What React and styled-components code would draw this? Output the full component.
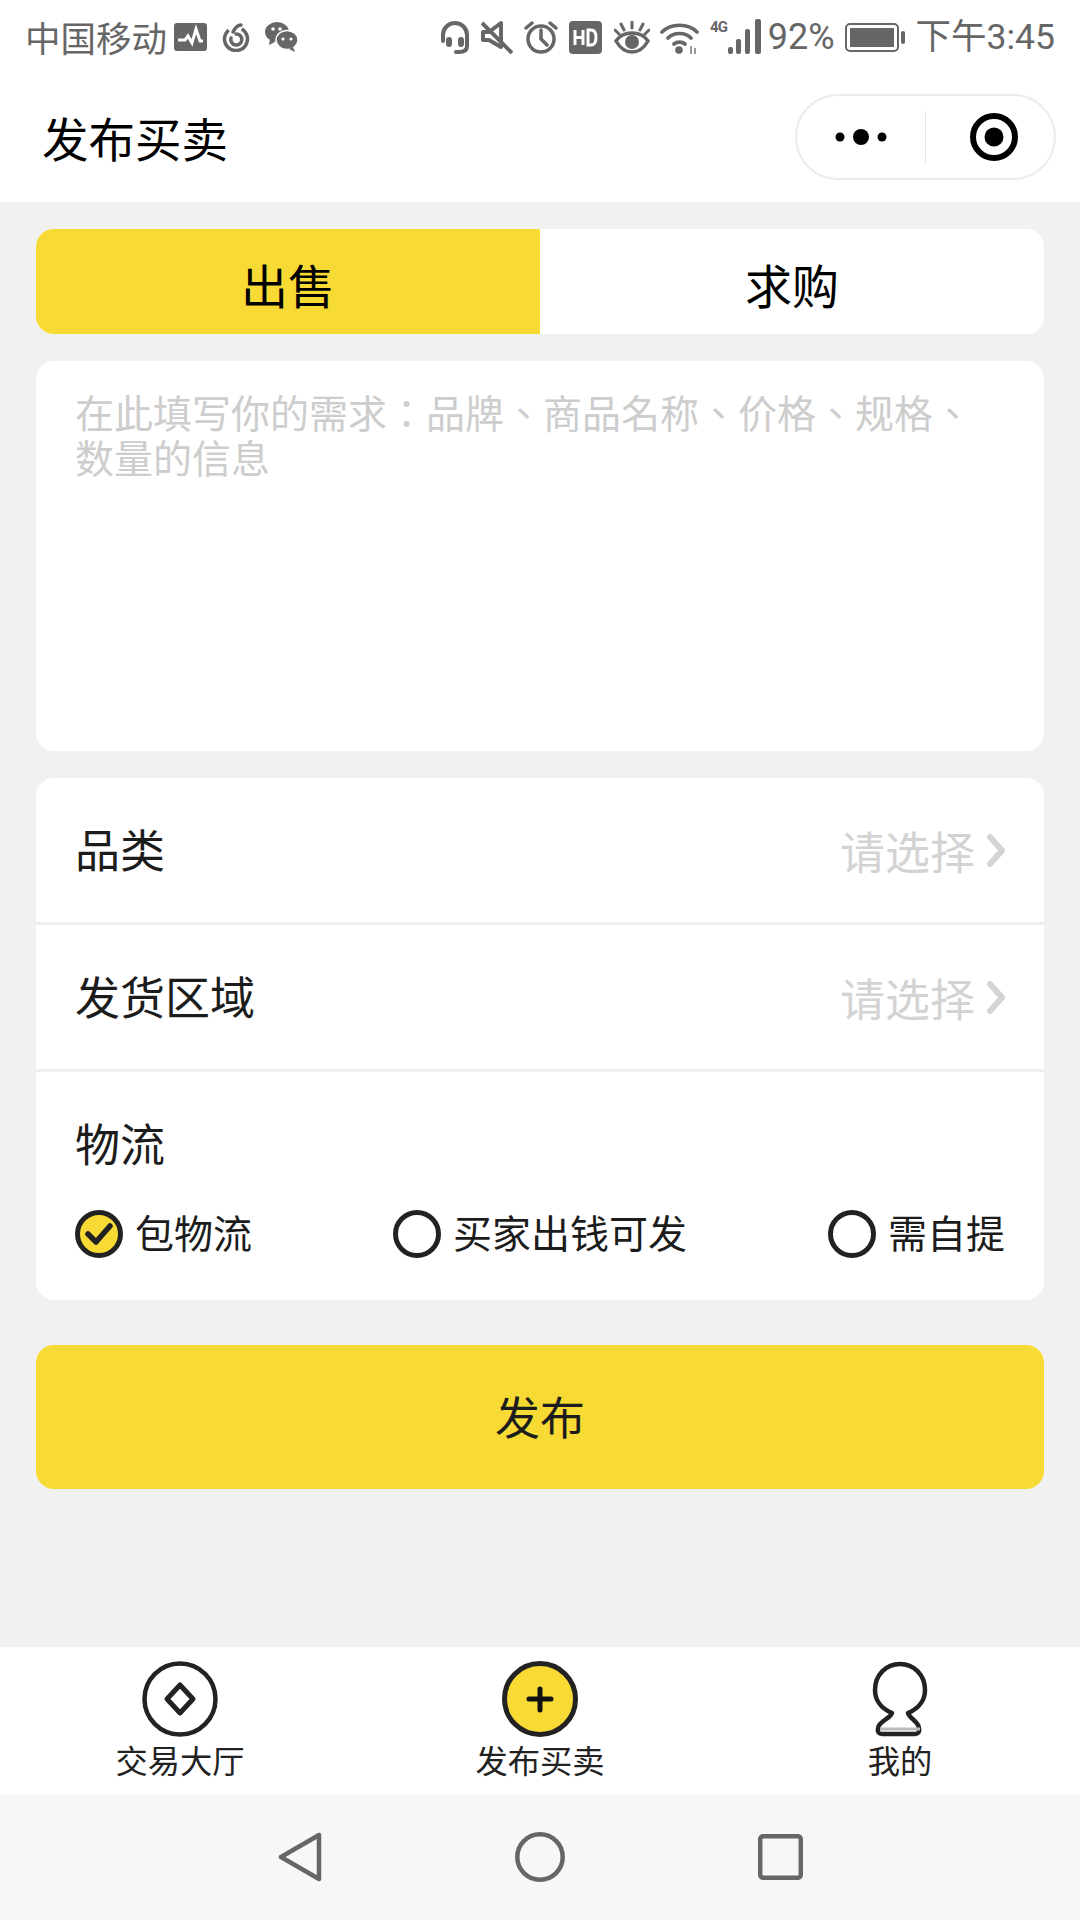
import styled, { createGlobalStyle } from 'styled-components';

const GlobalStyle = createGlobalStyle`
  * {
    box-sizing: border-box;
  }
  html, body {
    margin: 0;
    padding: 0;
    background: #f1f1f1;
  }
  body {
    font-family: "Noto Sans CJK SC", "Noto Sans", sans-serif;
  }
`;

const Page = styled.div`
  width: 1080px;
  height: 1920px;
  display: flex;
  flex-direction: column;
  background: #f1f1f1;
  overflow: hidden;
`;

const StatusBar = styled.div`
  height: 75px;
  flex: none;
  display: flex;
  align-items: center;
  justify-content: space-between;
  padding: 0 25px 0 25px;
  background: #fff;
  color: #666;
  font-size: 35.5px;
  line-height: 40px;
`;

const StatusGroup = styled.div`
  display: flex;
  align-items: center;
  height: 40px;
  margin-top: -1px;
`;

const Carrier = styled.span`
  margin-right: 7px;
`;

const StatusIcon = styled.svg`
  display: block;
  flex: none;
  margin-left: ${(props) => props.$gap || 0}px;
`;

const Percent = styled.span`
  font-family: Roboto, sans-serif;
  font-size: 36px;
  margin-left: 6px;
`;

const Clock = styled.span`
  font-family: Roboto, "Noto Sans CJK SC", sans-serif;
  font-size: 35.5px;
  margin-left: 11px;
`;

const TitleBar = styled.div`
  height: 127px;
  flex: none;
  display: flex;
  align-items: center;
  justify-content: space-between;
  padding: 0 24px 4px 42px;
  background: #fff;
`;

const Title = styled.div`
  font-size: 46.5px;
  line-height: 60px;
  color: #000;
`;

const Capsule = styled.div`
  width: 261px;
  height: 86px;
  display: flex;
  align-items: center;
  border: 2px solid #ececec;
  border-radius: 43px;
  background: #fff;
`;

const CapsuleSide = styled.div`
  flex: ${(props) => (props.$divided ? '1' : '0 0 128px')};
  height: 52px;
  display: flex;
  align-items: center;
  justify-content: center;
  padding-left: ${(props) => (props.$divided ? '8px' : '0')};
  border-left: ${(props) => (props.$divided ? '1px solid #e4e4e4' : 'none')};
`;

const Main = styled.main`
  flex: 1;
  display: flex;
  flex-direction: column;
  padding: 27px 36px 0;
`;

const Tabs = styled.div`
  height: 105px;
  display: flex;
  border-radius: 18px;
  overflow: hidden;
  background: #fff;
`;

const Tab = styled.div`
  flex: 1;
  display: flex;
  align-items: center;
  justify-content: center;
  padding-top: 3px;
  font-size: 47px;
  color: #000;
  background: ${(props) => (props.$active ? '#f7da33' : '#fff')};
`;

const NoteCard = styled.div`
  height: 390px;
  margin-top: 27px;
  padding: 28px 39px;
  border-radius: 18px;
  background: #fff;
  color: #cdcdcd;
  font-family: "Noto Sans CJK TC", "Noto Sans CJK SC", sans-serif;
  font-size: 39px;
  line-height: 45px;
`;

const FormCard = styled.div`
  margin-top: 27px;
  border-radius: 18px;
  background: #fff;
  overflow: hidden;
`;

const Row = styled.div`
  height: 147px;
  display: flex;
  align-items: center;
  justify-content: space-between;
  padding: 0 39px;
  border-bottom: 3px solid #eeeeee;
`;

const RowLabel = styled.div`
  font-size: 45px;
  line-height: 60px;
  color: #1c1c1c;
  margin-top: -2px;
`;

const RowValue = styled.div`
  display: flex;
  align-items: center;
  gap: 12px;
  font-size: 45px;
  color: #d3d3d3;
`;

const Logistics = styled.div`
  height: 228px;
  padding: 43px 39px 0;
`;

const Options = styled.div`
  display: flex;
  justify-content: space-between;
  margin-top: 31px;
`;

const Option = styled.div`
  display: flex;
  align-items: center;
  gap: 12px;
  font-size: 39px;
  line-height: 48px;
  color: #1c1c1c;
`;

const Radio = styled.span`
  width: 48px;
  height: 48px;
  flex: none;
  display: flex;
  align-items: center;
  justify-content: center;
  margin-top: 6px;
  border: 5px solid #222;
  border-radius: 50%;
  background: ${(props) => (props.$checked ? '#f7da33' : '#fff')};
`;

const PublishButton = styled.button`
  height: 144px;
  margin-top: 45px;
  padding: 0 0 4px;
  border: none;
  border-radius: 18px;
  background: #f7da33;
  color: #1c1c1c;
  font-family: inherit;
  font-size: 45px;
`;

const TabBar = styled.nav`
  height: 147px;
  flex: none;
  display: flex;
  background: #fff;
`;

const TabItem = styled.div`
  width: 360px;
  display: flex;
  flex-direction: column;
  align-items: center;
  padding-top: 14px;
`;

const TabLabel = styled.div`
  margin-top: 1px;
  font-size: 32.3px;
  line-height: 42px;
  color: #222;
`;

const NavBar = styled.div`
  height: 126px;
  flex: none;
  display: flex;
  align-items: center;
  justify-content: center;
  background: #f7f7f7;
`;

const NavSlot = styled.div`
  width: 240px;
  display: flex;
  justify-content: center;
`;

const Chevron = () => (
  <svg width="18" height="33" viewBox="0 0 18 33">
    <path d="M3 3l12 13.5L3 30" fill="none" stroke="#d4d4d4" strokeWidth="6" strokeLinecap="round" strokeLinejoin="round" />
  </svg>
);

const StatusLeftIcons = () => (
  <>
    <StatusIcon width="33" height="28" viewBox="0 0 33 28">
      <rect width="33" height="28" rx="3" fill="#666" />
      <path d="M4 17h7l3-4 4 7 4-14 4 12h3" fill="none" stroke="#fff" strokeWidth="3" />
    </StatusIcon>
    <StatusIcon $gap={14} width="30" height="30" viewBox="0 0 30 30">
      <circle cx="15" cy="17" r="11.500" fill="none" stroke="#666" strokeWidth="3.500" strokeDasharray="58 14" transform="rotate(-60 15 17)" />
      <path d="M20 3c-4 0-6 3-8 7M15 12a5.500 5.500 0 1 1-5 4" fill="none" stroke="#666" strokeWidth="3.500" strokeLinecap="round" />
    </StatusIcon>
    <StatusIcon $gap={14} width="33" height="30" viewBox="0 0 33 30">
      <ellipse cx="12" cy="10" rx="12" ry="10" fill="#666" />
      <path d="M5 17l-1 6 6-3z" fill="#666" />
      <ellipse cx="22" cy="18" rx="11" ry="9.500" fill="#666" stroke="#fff" strokeWidth="1.500" />
      <path d="M28 25l2 5-6-3z" fill="#666" />
      <circle cx="8" cy="7" r="1.800" fill="#fff" />
      <circle cx="15" cy="7" r="1.800" fill="#fff" />
      <circle cx="18" cy="17" r="1.600" fill="#fff" />
      <circle cx="26" cy="17" r="1.600" fill="#fff" />
    </StatusIcon>
  </>
);

const StatusRightIcons = () => (
  <>
    <StatusIcon width="30" height="34" viewBox="0 0 30 34">
      <path d="M3 21V15a12 12 0 0 1 24 0v11c0 4-3 6-8 6h-3" fill="none" stroke="#666" strokeWidth="4" strokeLinecap="round" />
      <rect x="6" y="17" width="6" height="10" rx="3" fill="#666" />
      <rect x="18" y="17" width="6" height="10" rx="3" fill="#666" />
    </StatusIcon>
    <StatusIcon $gap={11} width="32" height="34" viewBox="0 0 32 34">
      <path d="M2 12h6l12-9v24L8 20H2z" fill="none" stroke="#666" strokeWidth="4" strokeLinejoin="round" />
      <path d="M1 3l30 30" stroke="#666" strokeWidth="4" />
    </StatusIcon>
    <StatusIcon $gap={11} width="34" height="34" viewBox="0 0 34 34">
      <circle cx="17" cy="19" r="13" fill="none" stroke="#666" strokeWidth="3.500" />
      <path d="M17 10v9l6 6M2 8l6-5M32 8l-6-5" fill="none" stroke="#666" strokeWidth="3.500" strokeLinecap="round" />
    </StatusIcon>
    <StatusIcon $gap={11} width="33" height="33" viewBox="0 0 33 33">
      <rect width="33" height="33" rx="4" fill="#666" />
      <path d="M6 9v15M14 9v15M6 16.500h8" fill="none" stroke="#fff" strokeWidth="3" />
      <path d="M19 9v15h3c4 0 5-3 5-7.500s-1-7.500-5-7.500z" fill="none" stroke="#fff" strokeWidth="3" />
    </StatusIcon>
    <StatusIcon $gap={12} width="36" height="33" viewBox="0 0 36 33">
      <path d="M2 20c4-6 9-8 16-8s12 2 16 8c-4 7-9 11-16 11S6 27 2 20z" fill="none" stroke="#666" strokeWidth="3.500" />
      <circle cx="18" cy="21" r="7" fill="#666" />
      <path d="M18 1v6M7 3l3 6M29 3l-3 6M1 9l4 4M35 9l-4 4" stroke="#666" strokeWidth="3" strokeLinecap="round" />
    </StatusIcon>
    <StatusIcon $gap={10} width="39" height="33" viewBox="0 0 39 33">
      <path d="M2 11c9-9 26-9 35 0M8 17c6-6 17-6 23 0M14 23c3-2.500 8-2.500 11 0" fill="none" stroke="#666" strokeWidth="3.600" strokeLinecap="round" />
      <circle cx="19" cy="29" r="3.800" fill="#666" />
      <path d="M31 25v8M35 27v6" stroke="#999" strokeWidth="2" />
    </StatusIcon>
    <StatusIcon $gap={11} width="52" height="36" viewBox="0 0 52 36">
      <rect x="18" y="28" width="5" height="7" rx="2" fill="#666" />
      <rect x="26" y="20" width="5" height="15" rx="2" fill="#666" />
      <rect x="35" y="10" width="5" height="25" rx="2" fill="#666" />
      <rect x="45" y="0" width="6" height="35" rx="2" fill="#666" />
      <text x="0" y="13" fontFamily="Roboto, sans-serif" fontWeight="700" fontSize="15" fill="#666" textLength="18">4G</text>
    </StatusIcon>
    <Percent>92%</Percent>
    <StatusIcon $gap={10} width="60" height="29" viewBox="0 0 60 29">
      <rect x="1" y="1" width="52" height="27" rx="4" fill="none" stroke="#666" strokeWidth="2" />
      <rect x="5" y="5" width="44" height="19" fill="#666" />
      <rect x="56" y="8" width="4" height="13" rx="2" fill="#666" />
    </StatusIcon>
    <Clock>下午3:45</Clock>
  </>
);

const MoreIcon = () => (
  <svg width="52" height="20" viewBox="0 0 52 20">
    <circle cx="5" cy="10" r="4.500" fill="#000" />
    <circle cx="26" cy="10" r="8" fill="#000" />
    <circle cx="47" cy="10" r="4.500" fill="#000" />
  </svg>
);

const TargetIcon = () => (
  <svg width="48" height="48" viewBox="0 0 48 48">
    <circle cx="24" cy="24" r="21" fill="none" stroke="#000" strokeWidth="6" />
    <circle cx="24" cy="24" r="9.500" fill="#000" />
  </svg>
);

const CheckMark = () => (
  <svg width="30" height="26" viewBox="0 0 30 26">
    <path d="M4 13l8 8L26 5" fill="none" stroke="#222" strokeWidth="5.500" strokeLinecap="round" strokeLinejoin="round" />
  </svg>
);

const HallIcon = () => (
  <svg width="76" height="76" viewBox="0 0 76 76">
    <circle cx="38" cy="38" r="35.500" fill="none" stroke="#222" strokeWidth="4.500" />
    <path d="M38 24l13 14-13 14-13-14z" fill="none" stroke="#222" strokeWidth="5" strokeLinejoin="round" />
  </svg>
);

const PublishIcon = () => (
  <svg width="76" height="76" viewBox="0 0 76 76">
    <circle cx="38" cy="38" r="35.500" fill="#f7da33" stroke="#222" strokeWidth="5" />
    <path d="M38 28v21M27 38h22" stroke="#111" strokeWidth="5" strokeLinecap="round" />
  </svg>
);

const MineIcon = () => (
  <svg width="56" height="76" viewBox="0 0 56 76">
    <path
      d="M20 52C8 47 3 38 3 29 3 14 14 3 28 3s25 11 25 26c0 9-5 18-17 23 2 6 10 8 11 15 1 4-1 6-4 6H10c-3 0-5-2-4-6 1-7 12-9 14-15z"
      fill="none"
      stroke="#222"
      strokeWidth="4.500"
      strokeLinejoin="round"
    />
    <path d="M8 68h40" stroke="#bbb" strokeWidth="3" />
  </svg>
);

const BackIcon = () => (
  <svg width="44" height="50" viewBox="0 0 44 50">
    <path d="M41 3v44L3 25z" fill="none" stroke="#666" strokeWidth="4.500" strokeLinejoin="round" />
  </svg>
);

const HomeIcon = () => (
  <svg width="50" height="50" viewBox="0 0 50 50">
    <circle cx="25" cy="25" r="22.700" fill="none" stroke="#666" strokeWidth="4.500" />
  </svg>
);

const RecentIcon = () => (
  <svg width="45" height="46" viewBox="0 0 45 46">
    <rect x="2.200" y="2.200" width="40.600" height="41.600" rx="3" fill="none" stroke="#666" strokeWidth="4.500" />
  </svg>
);

const App = () => (
  <Page>
    <GlobalStyle />
    <StatusBar>
      <StatusGroup>
        <Carrier>中国移动</Carrier>
        <StatusLeftIcons />
      </StatusGroup>
      <StatusGroup>
        <StatusRightIcons />
      </StatusGroup>
    </StatusBar>

    <TitleBar>
      <Title>发布买卖</Title>
      <Capsule>
        <CapsuleSide>
          <MoreIcon />
        </CapsuleSide>
        <CapsuleSide $divided>
          <TargetIcon />
        </CapsuleSide>
      </Capsule>
    </TitleBar>

    <Main>
      <Tabs>
        <Tab $active>出售</Tab>
        <Tab>求购</Tab>
      </Tabs>

      <NoteCard>在此填写你的需求：品牌、商品名称、价格、规格、数量的信息</NoteCard>

      <FormCard>
        <Row>
          <RowLabel>品类</RowLabel>
          <RowValue>
            请选择
            <Chevron />
          </RowValue>
        </Row>
        <Row>
          <RowLabel>发货区域</RowLabel>
          <RowValue>
            请选择
            <Chevron />
          </RowValue>
        </Row>
        <Logistics>
          <RowLabel>物流</RowLabel>
          <Options>
            <Option>
              <Radio $checked>
                <CheckMark />
              </Radio>
              包物流
            </Option>
            <Option>
              <Radio />
              买家出钱可发
            </Option>
            <Option>
              <Radio />
              需自提
            </Option>
          </Options>
        </Logistics>
      </FormCard>

      <PublishButton>发布</PublishButton>
    </Main>

    <TabBar>
      <TabItem>
        <HallIcon />
        <TabLabel>交易大厅</TabLabel>
      </TabItem>
      <TabItem>
        <PublishIcon />
        <TabLabel>发布买卖</TabLabel>
      </TabItem>
      <TabItem>
        <MineIcon />
        <TabLabel>我的</TabLabel>
      </TabItem>
    </TabBar>

    <NavBar>
      <NavSlot>
        <BackIcon />
      </NavSlot>
      <NavSlot>
        <HomeIcon />
      </NavSlot>
      <NavSlot>
        <RecentIcon />
      </NavSlot>
    </NavBar>
  </Page>
);

export default App;
